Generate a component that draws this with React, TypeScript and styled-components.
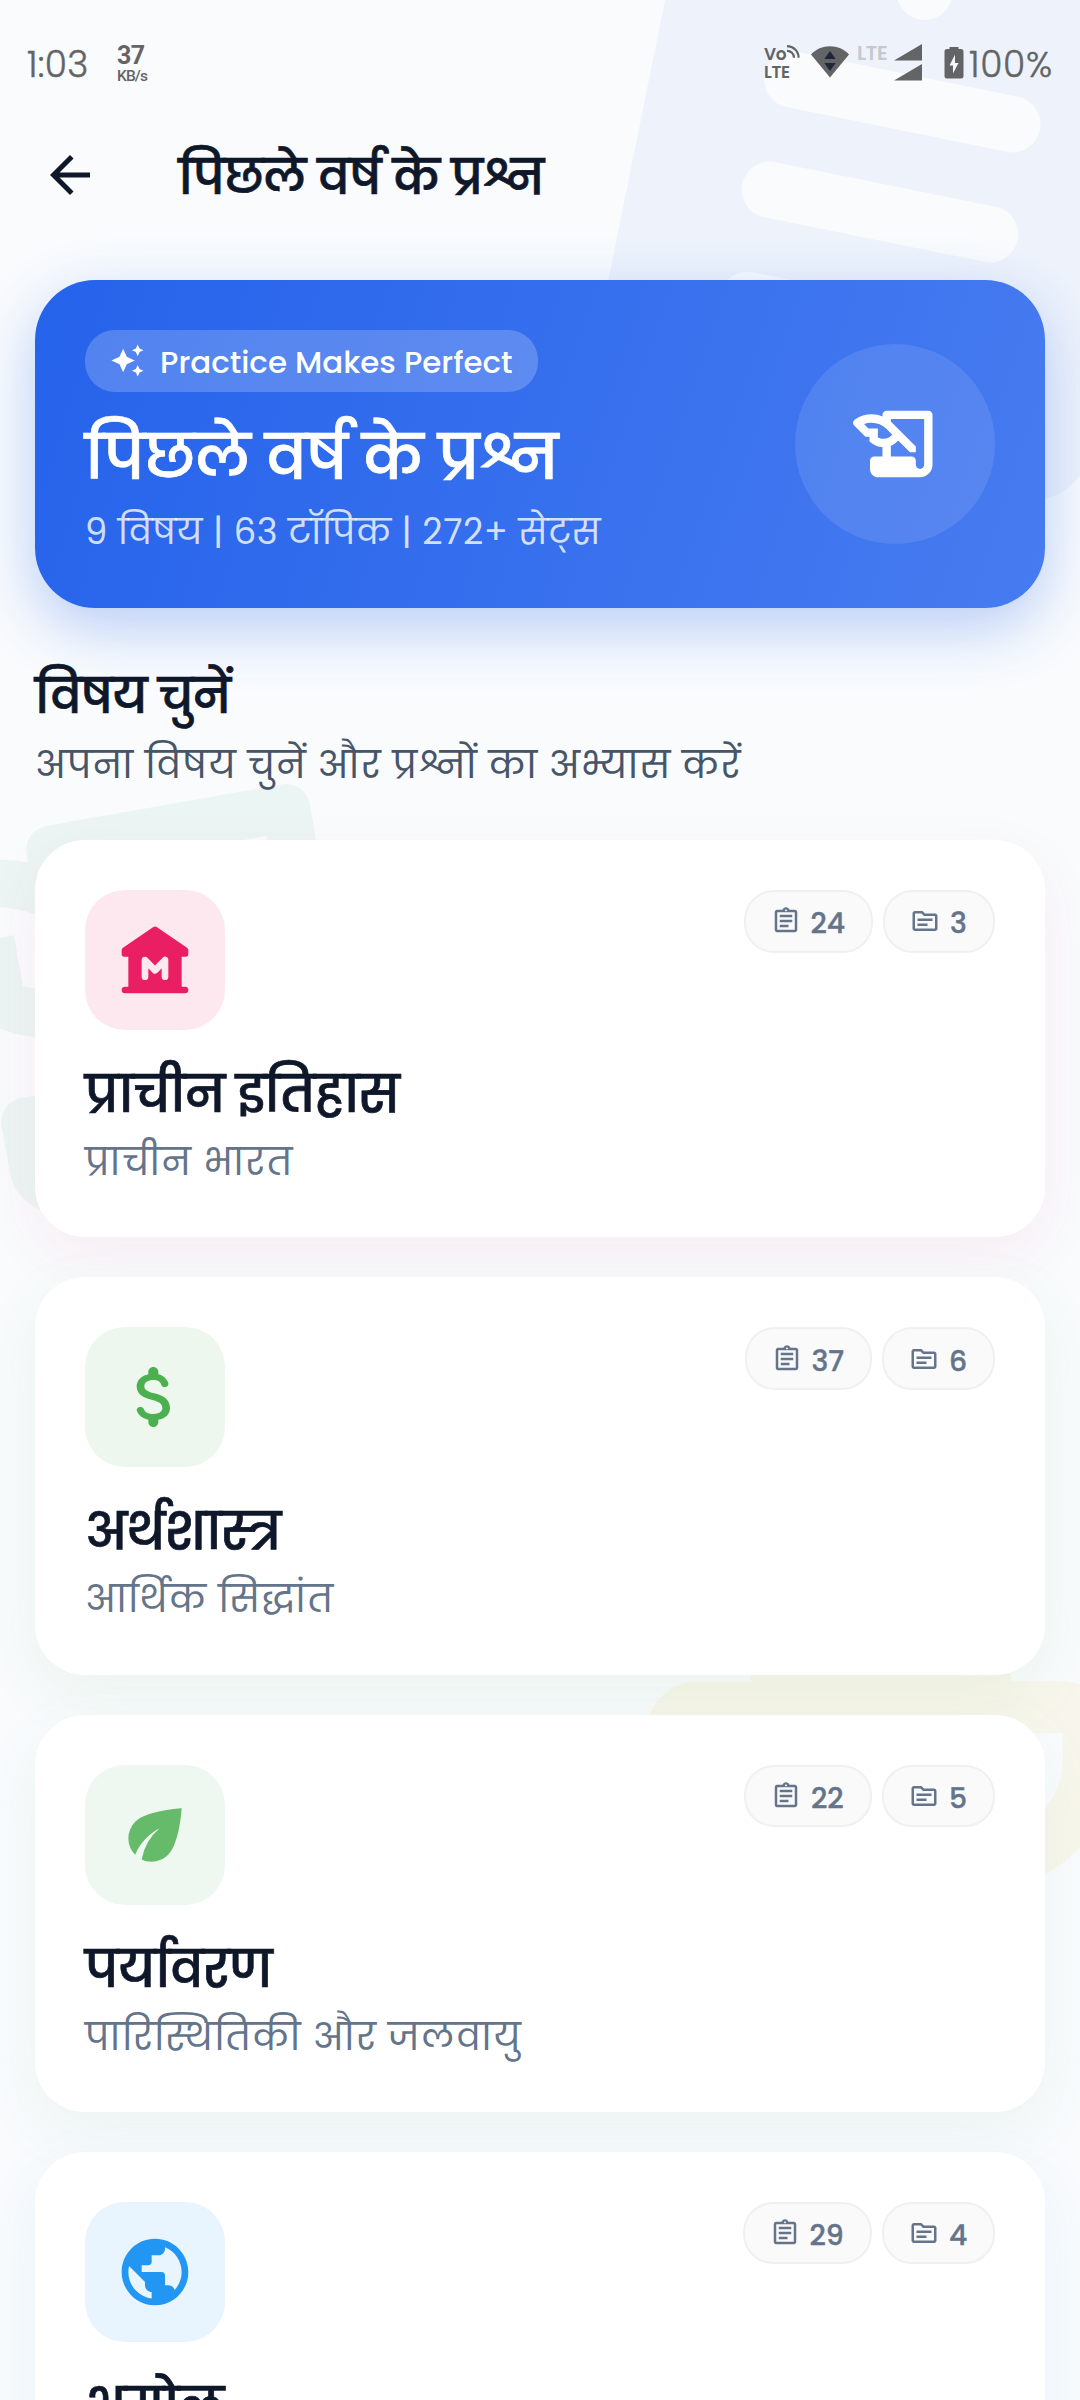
import React from "react";
import styled, { createGlobalStyle } from "styled-components";
import {
  MdArrowBack,
  MdAutoAwesome,
  MdEco,
  MdOutlineAssignment,
  MdOutlineSource,
  MdPublic,
} from "react-icons/md";

const Global = createGlobalStyle`
  *, *::before, *::after { box-sizing: border-box; }
  html, body { margin: 0; padding: 0; background: #f9fbfd; }
  body {
    font-family: Poppins, "Noto Sans Devanagari", "Noto Sans", sans-serif;
    color: #0f172a;
    -webkit-font-smoothing: antialiased;
  }
  svg { display: block; flex: none; }
`;

const Screen = styled.div`
  position: relative;
  isolation: isolate;
  width: 1080px;
  height: 2400px;
  overflow: hidden;
  display: flex;
  flex-direction: column;
  background: #f9fbfd;
  > * { flex: none; }
`;

/* Faint oversized glyphs floating behind the page content. */
const Backdrop = styled.div<{ $x: number; $y: number; $size: number; $turn: number; $color: string }>`
  position: absolute;
  z-index: -1;
  left: ${(p) => p.$x}px;
  top: ${(p) => p.$y}px;
  width: ${(p) => p.$size}px;
  height: ${(p) => p.$size}px;
  transform: rotate(${(p) => p.$turn}deg);
  color: ${(p) => p.$color};
  svg { width: 100%; height: 100%; }
`;

const StatusBar = styled.header`
  height: 84px;
  padding: 40px 28px 0 27px;
  display: flex;
  align-items: flex-start;
  justify-content: space-between;
  color: #636466;
`;

const StatusGroup = styled.div`
  display: flex;
  align-items: flex-start;
`;

const Clock = styled.span`
  font-size: 36px;
  font-weight: 300;
  line-height: 49px;
  letter-spacing: 0.3px;
  -webkit-text-stroke: 0.4px currentColor;
  width: 90px;
`;

const NetSpeed = styled.div`
  display: flex;
  flex-direction: column;
  padding-top: 5px;
  b { font: 700 25px/22px Roboto, sans-serif; letter-spacing: -0.5px; }
  span { font: 500 15.5px/18px Roboto, sans-serif; letter-spacing: -0.9px; }
`;

const VoLte = styled.div`
  width: 47px;
  padding-top: 5px;
  display: flex;
  flex-direction: column;
  font: 600 17px/18px Poppins, sans-serif;
  letter-spacing: -0.3px;
  div { display: flex; gap: 1px; }
`;

const DimLte = styled.span`
  font: 600 20px/26px Poppins, sans-serif;
  color: #c5c8cc;
  width: 37px;
  margin-left: 8px;
  letter-spacing: -0.4px;
`;

const Gap = styled.span`
  width: 22px;
`;

const BatteryText = styled.span`
  font-size: 36px;
  font-weight: 300;
  line-height: 49px;
  letter-spacing: 0.7px;
  -webkit-text-stroke: 0.4px currentColor;
  width: 83px;
  margin-left: 5px;
  white-space: nowrap;
`;

const AppBar = styled.nav`
  height: 196px;
  padding: 61px 40px 0;
  display: flex;
  align-items: flex-start;
  gap: 78.5px;
`;

const BackButton = styled.button`
  width: 60px;
  height: 60px;
  padding: 0;
  border: 0;
  background: none;
  color: #0f172a;
`;

type TextProps = {
  $size: number;
  $line: number;
  $weight?: number;
  $color?: string;
  $track?: number;
  $top?: number;
};

const Text = styled.div<TextProps>`
  font-size: ${(p) => p.$size}px;
  line-height: ${(p) => p.$line}px;
  font-weight: ${(p) => p.$weight ?? 400};
  color: ${(p) => p.$color ?? "#0f172a"};
  letter-spacing: ${(p) => p.$track ?? 0}px;
  margin-top: ${(p) => p.$top ?? 0}px;
  white-space: nowrap;
  width: max-content;
`;

/* Headings sit between medium and semibold. */
const Heading = styled(Text)`
  font-weight: 500;
  -webkit-text-stroke: 0.7px currentColor;
`;

const Hero = styled.section`
  margin: 0 35px;
  height: 327.5px;
  padding: 50px;
  border-radius: 60px;
  display: flex;
  justify-content: space-between;
  background: linear-gradient(108deg, #2563eb 0%, #477bf0 100%);
  box-shadow: 0 20px 60px rgba(37, 99, 235, 0.3);
`;

const HeroCopy = styled.div`
  display: flex;
  flex-direction: column;
  align-items: flex-start;
`;

const HeroChip = styled.div`
  height: 62.5px;
  width: 452.5px;
  padding: 0 25px;
  border-radius: 30px;
  display: flex;
  align-items: center;
  gap: 15px;
  color: #fff;
  background: rgba(255, 255, 255, 0.2);
`;

const HeroBadge = styled.div`
  width: 200px;
  height: 200px;
  margin-top: 14px;
  border-radius: 50%;
  display: grid;
  place-items: center;
  color: #fff;
  background: rgba(255, 255, 255, 0.1);
`;

const SectionHead = styled.div`
  height: 232.5px;
  padding: 55.5px 35px 0;
`;

const CardList = styled.main`
  display: flex;
  flex-direction: column;
  gap: 40px;
  padding: 0 35px;
`;

const Card = styled.article<{ $glow: string }>`
  height: 397.3px;
  padding: 50px;
  border-radius: 50px;
  background: #fff;
  box-shadow: 0 20px 60px ${(p) => p.$glow};
`;

const CardTop = styled.div`
  display: flex;
  justify-content: space-between;
  align-items: flex-start;
  margin-bottom: 31px;
`;

const IconTile = styled.div<{ $bg: string; $fg: string }>`
  width: 140px;
  height: 140px;
  border-radius: 40px;
  display: grid;
  place-items: center;
  background: ${(p) => p.$bg};
  color: ${(p) => p.$fg};
`;

const Chips = styled.div`
  display: flex;
  gap: 10px;
`;

const Chip = styled.div<{ $w: number }>`
  width: ${(p) => p.$w}px;
  height: 62.5px;
  padding-left: 25px;
  border: 2.5px solid #f0f0f1;
  border-radius: 30px;
  display: flex;
  align-items: center;
  gap: 10px;
  background: #fafafa;
  color: #64748b;
  font-size: 28.3px;
  font-weight: 500;
  line-height: 42px;
  -webkit-text-stroke: 0.4px currentColor;
  span { padding-top: 4px; }
`;

const HistoryEdu = ({ size }: { size?: number }) => (
  <svg width={size} height={size} viewBox="0 0 24 24" fill="currentColor">
    <path d="M10 4c-.55 0-1 .45-1 1v.38c-.83-.33-1.72-.5-2.61-.5-1.42 0-2.85.43-4.07 1.3-.47.33-.52.98-.12 1.38l2.7 2.7h.98v1.11c.86.86 1.98 1.31 3.11 1.36V15H7c-.55 0-1 .45-1 1v2c0 1.1.9 2 2 2h10c1.66 0 3-1.34 3-3V5c0-.55-.45-1-1-1H10zm-2.11 6.41V8.26H5.61L4.57 7.22c.57-.22 1.19-.34 1.82-.34 1.34 0 2.6.52 3.55 1.46l1.41 1.41-.2.2c-.51.51-1.19.8-1.92.8-.48 0-.94-.12-1.34-.34zM19 17c0 .55-.45 1-1 1s-1-.45-1-1v-1c0-.55-.45-1-1-1h-5v-2.59c.57-.23 1.1-.57 1.56-1.03l.2-.2L15.59 14H17v-1.41l-6-5.97V6h8v11z" />
  </svg>
);

const Assignment = () => (
  <svg viewBox="0 0 24 24" fill="currentColor" fillRule="evenodd">
    <path d="M19 3h-4.18C14.4 1.84 13.3 1 12 1s-2.4.84-2.82 2H5c-1.1 0-2 .9-2 2v14c0 1.1.9 2 2 2h14c1.1 0 2-.9 2-2V5c0-1.1-.9-2-2-2zm-7 0c.55 0 1 .45 1 1s-.45 1-1 1-1-.45-1-1 .45-1 1-1zM8 7h8a1 1 0 0 1 0 2H8a1 1 0 0 1 0-2zM8 11h8a1 1 0 0 1 0 2H8a1 1 0 0 1 0-2zM8 15h5a1 1 0 0 1 0 2H8a1 1 0 0 1 0-2z" />
  </svg>
);

const Trophy = () => (
  <svg viewBox="0 0 24 24" fill="currentColor">
    <path d="M19 5h-2V4c0-.55-.45-1-1-1H8c-.55 0-1 .45-1 1v1H5c-1.1 0-2 .9-2 2v1c0 2.55 1.92 4.63 4.39 4.94.63 1.5 1.98 2.63 3.61 2.96V19H8c-.55 0-1 .45-1 1s.45 1 1 1h8c.55 0 1-.45 1-1s-.45-1-1-1h-3v-3.1c1.63-.33 2.98-1.46 3.61-2.96C19.08 12.63 21 10.55 21 8V7c0-1.1-.9-2-2-2zM5 8V7h2v3.82C5.84 10.4 5 9.3 5 8zm14 0c0 1.3-.84 2.4-2 2.82V7h2v1z" />
  </svg>
);

const Museum = () => (
  <svg width="80" height="80" viewBox="0 0 24 24" fill="currentColor">
    <path d="M22 10.3V9.1c0-.3-.15-.6-.4-.78l-9-6.15a1 1 0 0 0-1.2 0l-9 6.15c-.25.18-.4.48-.4.78v1.2c0 .4.3.7.7.7H4v9H3a1 1 0 0 0 0 2h18a1 1 0 0 0 0-2h-1v-9h1.3c.4 0 .7-.3.7-.7z" />
    <path d="M9 17v-5l3 3.1 3-3.1v5" fill="none" stroke="#fde8ef" strokeWidth="2" strokeLinecap="round" strokeLinejoin="round" />
  </svg>
);

const Dollar = () => (
  <svg width="80" height="80" viewBox="0 0 24 24" fill="currentColor">
    <path d="M11.8 10.9c-2.27-.59-3-1.2-3-2.15 0-1.09 1.01-1.85 2.7-1.85 1.42 0 2.13.54 2.39 1.4.12.4.45.7.87.7h.3c.66 0 1.13-.65.9-1.27-.42-1.18-1.4-2.16-2.96-2.54V4.5c0-.83-.67-1.5-1.5-1.5S10 3.67 10 4.5v.66c-1.94.42-3.5 1.68-3.5 3.61 0 2.31 1.91 3.46 4.7 4.13 2.5.6 3 1.48 3 2.41 0 .69-.49 1.79-2.7 1.79-1.65 0-2.5-.59-2.83-1.43-.15-.39-.49-.67-.9-.67h-.28c-.67 0-1.14.68-.89 1.3.57 1.39 1.9 2.21 3.4 2.53v.67c0 .83.67 1.5 1.5 1.5s1.5-.67 1.5-1.5v-.65c1.95-.37 3.5-1.5 3.5-3.55 0-2.84-2.43-3.81-4.7-4.4z" />
  </svg>
);

const VoWaves = () => (
  <svg width="13" height="13" viewBox="0 0 13 13" fill="none" stroke="currentColor" strokeWidth="2.2">
    <path d="M0 1.2c6.5 0 11.6 5 11.6 11.6M0 5.8c4 0 7 3 7 7" />
  </svg>
);

const Wifi = () => (
  <svg width="38" height="44" viewBox="0 0 38 44">
    <path d="M19 37.500L0 14.500C5 9 11.500 6.200 19 6.200S33 9 38 14.500z" fill="#636466" />
    <path d="M13.300 19h11.400L19 11zM13.300 23h11.400L19 31z" fill="#20263a" />
  </svg>
);

const Signal = () => (
  <svg width="28" height="44" viewBox="0 0 28 44" fill="#636466">
    <path d="M0 20.500L28 4v16.500zM0 40.500L28 24v16.500z" />
  </svg>
);

const Battery = () => (
  <svg width="20" height="44" viewBox="0 0 20 44">
    <path d="M5.500 9V7h9v2h2.500a2.500 2.500 0 0 1 2.500 2.500V36a2.500 2.500 0 0 1-2.500 2.500H3A2.500 2.500 0 0 1 .5 36V11.500A2.500 2.500 0 0 1 3 9z" fill="#636466" />
    <path d="M11 14.500L5.500 25.500H9v8l5.500-10.500H11z" fill="#f4f8fc" />
  </svg>
);

type Subject = {
  title: string;
  sub: string;
  sets: string;
  setsW: number;
  topics: string;
  topicsW: number;
  bg: string;
  fg: string;
  glow: string;
  icon: React.ReactNode;
};

const subjects: Subject[] = [
  {
    title: "प्राचीन इतिहास", sub: "प्राचीन भारत",
    sets: "24", setsW: 129.5, topics: "3", topicsW: 112,
    bg: "#fde8ef", fg: "#e91e63", glow: "rgba(220, 40, 100, 0.065)", icon: <Museum />,
  },
  {
    title: "अर्थशास्त्र", sub: "आर्थिक सिद्धांत",
    sets: "37", setsW: 127.5, topics: "6", topicsW: 113,
    bg: "#edf7ee", fg: "#4caf50", glow: "rgba(76, 160, 80, 0.08)", icon: <Dollar />,
  },
  {
    title: "पर्यावरण", sub: "पारिस्थितिकी और जलवायु",
    sets: "22", setsW: 128, topics: "5", topicsW: 113,
    bg: "#eff8f0", fg: "#66bb6a", glow: "rgba(90, 165, 106, 0.08)", icon: <MdEco size={80} />,
  },
  {
    title: "भूगोल", sub: "विश्व और भारत",
    sets: "29", setsW: 129.5, topics: "4", topicsW: 113,
    bg: "#e8f4fe", fg: "#2196f3", glow: "rgba(33, 150, 243, 0.08)", icon: <MdPublic size={80} />,
  },
];

export default function App() {
  return (
    <Screen>
      <Global />
      <Backdrop $x={543} $y={-125} $size={674} $turn={11.46} $color="#eef3fb"><Assignment /></Backdrop>
      <Backdrop $x={-161.5} $y={718.5} $size={575} $turn={-10} $color="#ebf5f3"><HistoryEdu /></Backdrop>
      <Backdrop $x={568} $y={1551} $size={625} $turn={0} $color="#f8f6ec"><Trophy /></Backdrop>

      <StatusBar>
        <StatusGroup>
          <Clock>1:03</Clock>
          <NetSpeed><b>37</b><span>KB/s</span></NetSpeed>
        </StatusGroup>
        <StatusGroup>
          <VoLte><div>Vo<VoWaves /></div><span>LTE</span></VoLte>
          <Wifi />
          <DimLte>LTE</DimLte>
          <Signal />
          <Gap />
          <Battery />
          <BatteryText>100%</BatteryText>
        </StatusGroup>
      </StatusBar>

      <AppBar>
        <BackButton aria-label="back"><MdArrowBack size={60} /></BackButton>
        <Heading $size={48} $line={60} $track={-0.6} $top={2.5}>पिछले वर्ष के प्रश्न</Heading>
      </AppBar>

      <Hero>
        <HeroCopy>
          <HeroChip>
            <MdAutoAwesome size={35} />
            <Text $size={30.9} $line={45} $weight={500} $color="#fff" $top={4}>Practice Makes Perfect</Text>
          </HeroChip>
          <Heading $size={62.2} $line={97} $color="#fff" $track={-0.8} $top={16.8}>पिछले वर्ष के प्रश्न</Heading>
          <Text $size={35.3} $line={52} $color="rgba(255,255,255,.8)" $track={0.55}>9 विषय | 63 टॉपिक | 272+ सेट्स</Text>
        </HeroCopy>
        <HeroBadge><HistoryEdu size={100} /></HeroBadge>
      </Hero>

      <SectionHead>
        <Heading $size={48} $line={68} $track={-1}>विषय चुनें</Heading>
        <Text $size={37.5} $line={69} $color="#475569" $track={0.95}>अपना विषय चुनें और प्रश्नों का अभ्यास करें</Text>
      </SectionHead>

      <CardList>
        {subjects.map((s) => (
          <Card key={s.title} $glow={s.glow}>
            <CardTop>
              <IconTile $bg={s.bg} $fg={s.fg}>{s.icon}</IconTile>
              <Chips>
                <Chip $w={s.setsW}><MdOutlineAssignment size={30} strokeWidth={0} /><span>{s.sets}</span></Chip>
                <Chip $w={s.topicsW}><MdOutlineSource size={30} strokeWidth={0} /><span>{s.topics}</span></Chip>
              </Chips>
            </CardTop>
            <Heading $size={50.8} $line={68} $track={-1.1}>{s.title}</Heading>
            <Text $size={37.5} $line={66.5} $color="#64748b" $track={1.1}>{s.sub}</Text>
          </Card>
        ))}
      </CardList>
    </Screen>
  );
}
